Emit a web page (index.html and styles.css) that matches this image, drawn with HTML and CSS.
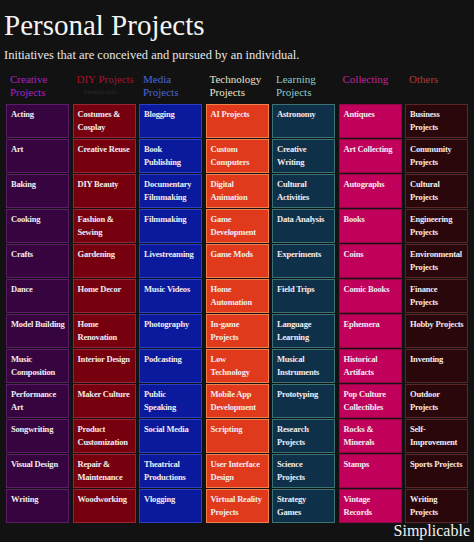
FILE: index.html
```html
<!DOCTYPE html>
<html lang="en">

<head>
    <title>Personal Projects</title>
    <meta charset="UTF-8">
    <meta name="viewport" content="width=device-width, initial-scale=1.0">
    <link rel="stylesheet" href="styles.css">
</head>

<body>
    <div class="page">
        <h1>Personal Projects</h1>
        <p class="lead">Initiatives that are conceived and pursued by an individual.</p>

        <div class="heads">
            <div class="head c1">Creative Projects</div>
            <div class="head c2">DIY Projects<span class="mark">Simplicable</span></div>
            <div class="head c3">Media Projects</div>
            <div class="head c4">Technology Projects</div>
            <div class="head c5">Learning Projects</div>
            <div class="head c6">Collecting</div>
            <div class="head c7">Others</div>
        </div>

        <div class="board">
            <!-- creative -->
            <div class="cell c1">Acting</div>
            <div class="cell c1">Art</div>
            <div class="cell c1">Baking</div>
            <div class="cell c1">Cooking</div>
            <div class="cell c1">Crafts</div>
            <div class="cell c1">Dance</div>
            <div class="cell c1">Model Building</div>
            <div class="cell c1">Music Composition</div>
            <div class="cell c1">Performance Art</div>
            <div class="cell c1">Songwriting</div>
            <div class="cell c1">Visual Design</div>
            <div class="cell c1">Writing</div>
            <!-- diy -->
            <div class="cell c2">Costumes &amp; Cosplay</div>
            <div class="cell c2">Creative Reuse</div>
            <div class="cell c2">DIY Beauty</div>
            <div class="cell c2">Fashion &amp; Sewing</div>
            <div class="cell c2">Gardening</div>
            <div class="cell c2">Home Decor</div>
            <div class="cell c2">Home Renovation</div>
            <div class="cell c2">Interior Design</div>
            <div class="cell c2">Maker Culture</div>
            <div class="cell c2">Product Customization</div>
            <div class="cell c2">Repair &amp; Maintenance</div>
            <div class="cell c2">Woodworking</div>
            <!-- media -->
            <div class="cell c3">Blogging</div>
            <div class="cell c3">Book Publishing</div>
            <div class="cell c3">Documentary Filmmaking</div>
            <div class="cell c3">Filmmaking</div>
            <div class="cell c3">Livestreaming</div>
            <div class="cell c3">Music Videos</div>
            <div class="cell c3">Photography</div>
            <div class="cell c3">Podcasting</div>
            <div class="cell c3">Public Speaking</div>
            <div class="cell c3">Social Media</div>
            <div class="cell c3">Theatrical Productions</div>
            <div class="cell c3">Vlogging</div>
            <!-- technology -->
            <div class="cell c4">AI Projects</div>
            <div class="cell c4">Custom Computers</div>
            <div class="cell c4">Digital Animation</div>
            <div class="cell c4">Game Development</div>
            <div class="cell c4">Game Mods</div>
            <div class="cell c4">Home Automation</div>
            <div class="cell c4">In-game Projects</div>
            <div class="cell c4">Low Technology</div>
            <div class="cell c4">Mobile App Development</div>
            <div class="cell c4">Scripting</div>
            <div class="cell c4">User Interface Design</div>
            <div class="cell c4">Virtual Reality Projects</div>
            <!-- learning -->
            <div class="cell c5">Astronomy</div>
            <div class="cell c5">Creative Writing</div>
            <div class="cell c5">Cultural Activities</div>
            <div class="cell c5">Data Analysis</div>
            <div class="cell c5">Experiments</div>
            <div class="cell c5">Field Trips</div>
            <div class="cell c5">Language Learning</div>
            <div class="cell c5">Musical Instruments</div>
            <div class="cell c5">Prototyping</div>
            <div class="cell c5">Research Projects</div>
            <div class="cell c5">Science Projects</div>
            <div class="cell c5">Strategy Games</div>
            <!-- collecting -->
            <div class="cell c6">Antiques</div>
            <div class="cell c6">Art Collecting</div>
            <div class="cell c6">Autographs</div>
            <div class="cell c6">Books</div>
            <div class="cell c6">Coins</div>
            <div class="cell c6">Comic Books</div>
            <div class="cell c6">Ephemera</div>
            <div class="cell c6">Historical Artifacts</div>
            <div class="cell c6">Pop Culture Collectibles</div>
            <div class="cell c6">Rocks &amp; Minerals</div>
            <div class="cell c6">Stamps</div>
            <div class="cell c6">Vintage Records</div>
            <!-- others -->
            <div class="cell c7">Business Projects</div>
            <div class="cell c7">Community Projects</div>
            <div class="cell c7">Cultural Projects</div>
            <div class="cell c7">Engineering Projects</div>
            <div class="cell c7">Environmental Projects</div>
            <div class="cell c7">Finance Projects</div>
            <div class="cell c7">Hobby Projects</div>
            <div class="cell c7">Inventing</div>
            <div class="cell c7">Outdoor Projects</div>
            <div class="cell c7">Self-Improvement</div>
            <div class="cell c7">Sports Projects</div>
            <div class="cell c7">Writing Projects</div>
        </div>

        <div class="brand">Simplicable</div>
    </div>
</body>

</html>
```

FILE: styles.css
```css
html,
body {
    margin: 0;
    background-color: #121212;
}
body {
    font-family: "Liberation Serif", "DejaVu Serif", serif;
    color: #f2f2f2;
}
.page {
    position: relative;
    width: 474px;
    height: 542px;
    overflow: hidden;
}
h1 {
    margin: 0;
    padding: 8px 0 0 4px;
    font-size: 29px;
    line-height: 34px;
    font-weight: normal;
    color: #f4f4f4;
}
.lead {
    margin: 5px 0 0 4px;
    font-size: 12.5px;
    line-height: 16px;
    color: #e8e8e8;
}
.heads,
.board {
    display: grid;
    grid-template-columns: repeat(7, 63px);
    column-gap: 3.5px;
    padding-left: 6px;
}
.heads {
    margin-top: 10px;
    height: 26px;
}
.head {
    padding-left: 4px;
    font-size: 11px;
    line-height: 13px;
}
.head .mark {
    display: block;
    padding-left: 7px;
    font-size: 7px;
    color: #2c2c2c;
}
.board {
    margin-top: 5px;
    grid-template-rows: repeat(12, 34px);
    grid-auto-flow: column;
    row-gap: 1px;
}
.cell {
    box-sizing: border-box;
    padding: 3px 2.5px 3px 4px;
    border: 1px solid;
    font-size: 8.5px;
    line-height: 12.5px;
    font-weight: bold;
    letter-spacing: -0.2px;
    color: #f2ecf0;
}
.brand {
    position: absolute;
    right: 4px;
    bottom: 1px;
    font-size: 16px;
    line-height: 20px;
    color: #f4f4f4;
}

/* column colours */
.head.c1 { color: #ad1fc4; }
.head.c2 { color: #a8122e; }
.head.c3 { color: #4a66d6; }
.head.c4 { color: #efe4c6; }
.head.c5 { color: #8ccccc; }
.head.c6 { color: #c0229e; }
.head.c7 { color: #b03a3a; }

.cell.c1 { background-color: #36053f; border-color: #5c1c68; }
.cell.c2 { background-color: #76000e; border-color: #9a2434; }
.cell.c3 { background-color: #0b199c; border-color: #2c40c4; }
.cell.c4 { background-color: #e0391b; border-color: #f08050; }
.cell.c5 { background-color: #0f3049; border-color: #3b7374; }
.cell.c6 { background-color: #c0005b; border-color: #8e0844; }
.cell.c7 { background-color: #2a070a; border-color: #5a2626; }
```
